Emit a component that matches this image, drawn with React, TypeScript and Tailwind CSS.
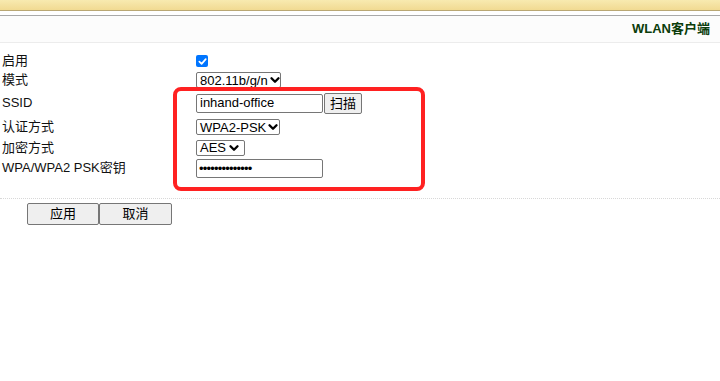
import { ChevronDown } from "lucide-react";

const font = { fontFamily: '"Liberation Sans", "Noto Sans CJK SC", sans-serif' };

const Select = ({ value, w }: { value: string; w: string }) => (
    <div className={`flex items-center justify-between h-[16px] border border-[#767676] rounded-[2px] bg-white pl-[3px] pr-[3px] text-[13px] leading-none text-black whitespace-nowrap ${w}`}>
        <span>{value}</span>
        <ChevronDown size={14} strokeWidth={4} className="text-black shrink-0" />
    </div>
)

const Row = ({ label, h, children }: { label: string; h: string; children: React.ReactNode }) => (
    <div className={`flex items-center ${h}`}>
        <div className="w-[196px] shrink-0 pl-[2px] text-[13px] text-[#111] whitespace-nowrap">{label}</div>
        <div className="flex items-center">{children}</div>
    </div>
)

export default function App() {
    return (
        <div className="relative w-full h-[381px] bg-white overflow-hidden" style={font}>
            {/* top band */}
            <div className="h-[11px] bg-gradient-to-b from-[#f8eab0] to-[#f1da92] border-b border-[#b9a774]" />
            <div className="h-[4px]" />
            <div className="h-[28px] border-t border-[#a9a9a9] border-b border-b-[#ececec] bg-[#fcfcfc] flex items-center justify-end pr-[10px]">
                <span className="text-[13px] font-bold text-[#0b3d0b]">WLAN客户端</span>
            </div>

            {/* form */}
            <div className="pt-[9px]">
                <Row label="启用" h="h-[18px]">
                    <div className="w-[12px] h-[12px] rounded-[2px] bg-[#0075ff] flex items-center justify-center">
                        <svg width="9" height="9" viewBox="0 0 10 10" fill="none">
                            <path d="M1.5 5.2 L4 7.6 L8.6 2.4" stroke="white" strokeWidth="1.9" strokeLinecap="round" strokeLinejoin="round" />
                        </svg>
                    </div>
                </Row>
                <Row label="模式" h="h-[20px]">
                    <Select value="802.11b/g/n" w="w-[85px]" />
                </Row>
                <Row label="SSID" h="h-[26px]">
                    <div className="w-[127px] h-[19px] border border-[#767676] rounded-[2px] flex items-center pl-[3px] text-[13px] text-black">inhand-office</div>
                    <button className="ml-[1px] w-[38px] h-[21px] border border-[#767676] rounded-[2px] bg-[#efefef] text-[13px] text-black leading-none">扫描</button>
                </Row>
                <Row label="认证方式" h="h-[22px]">
                    <Select value="WPA2-PSK" w="w-[84px]" />
                </Row>
                <Row label="加密方式" h="h-[19px]">
                    <Select value="AES" w="w-[49px]" />
                </Row>
                <Row label="WPA/WPA2 PSK密钥" h="h-[22px]">
                    <div className="w-[127px] h-[19px] border border-[#767676] rounded-[2px] flex items-center pl-[2px] text-[13px] tracking-[-0.8px] text-black leading-none">••••••••••••••</div>
                </Row>
            </div>

            <div className="mt-[19px] border-t border-dotted border-[#d8d8d8]" />

            <div className="flex pl-[27px] pt-[4px]">
                <button className="w-[72px] h-[22px] border border-[#767676] rounded-[2px] bg-[#efefef] text-[13px] text-black">应用</button>
                <button className="w-[73px] h-[22px] border border-[#767676] rounded-[2px] bg-[#efefef] text-[13px] text-black">取消</button>
            </div>

            {/* annotation box */}
            <div className="absolute left-[173px] top-[87px] w-[252px] h-[104px] border-[4px] border-[#ff2121] rounded-[8px]" />
        </div>
    )
}
